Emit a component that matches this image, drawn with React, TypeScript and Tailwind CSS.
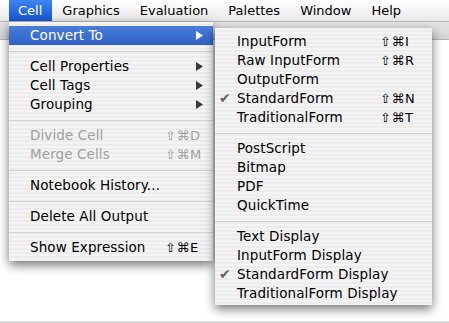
import React from "react";

type Item =
  | { sep: true }
  | { label: string; key?: string; sub?: boolean; off?: boolean; hi?: boolean; check?: boolean };

const mainItems: Item[] = [
  { label: "Convert To", sub: true, hi: true },
  { sep: true },
  { label: "Cell Properties", sub: true },
  { label: "Cell Tags", sub: true },
  { label: "Grouping", sub: true },
  { sep: true },
  { label: "Divide Cell", key: "⇧⌘D", off: true },
  { label: "Merge Cells", key: "⇧⌘M", off: true },
  { sep: true },
  { label: "Notebook History..." },
  { sep: true },
  { label: "Delete All Output" },
  { sep: true },
  { label: "Show Expression", key: "⇧⌘E" },
];

const subItems: Item[] = [
  { label: "InputForm", key: "⇧⌘I" },
  { label: "Raw InputForm", key: "⇧⌘R" },
  { label: "OutputForm" },
  { label: "StandardForm", key: "⇧⌘N", check: true },
  { label: "TraditionalForm", key: "⇧⌘T" },
  { sep: true },
  { label: "PostScript" },
  { label: "Bitmap" },
  { label: "PDF" },
  { label: "QuickTime" },
  { sep: true },
  { label: "Text Display" },
  { label: "InputForm Display" },
  { label: "StandardForm Display", check: true },
  { label: "TraditionalForm Display" },
];

const stripes =
  "bg-[repeating-linear-gradient(to_bottom,#f4f4f4_0px,#f4f4f4_2px,#ececec_2px,#ececec_4px)]";

function Arrow({ white }: { white?: boolean }) {
  return (
    <svg width="7" height="9" viewBox="0 0 7 9" className="shrink-0">
      <path d="M0 0 L7 4.5 L0 9 Z" fill={white ? "#ffffff" : "#3a3a3a"} />
    </svg>
  );
}

function Row({ item, pl, pr, keyW }: { item: Item; pl: string; pr: string; keyW: string }) {
  if ("sep" in item) {
    return (
      <div className="h-[12px] flex items-center">
        <div className="w-full h-px bg-[#d2d2d2]" />
      </div>
    );
  }
  return (
    <div
      className={
        "relative h-[19px] flex items-center " +
        pl +
        " " +
        pr +
        (item.hi ? " bg-gradient-to-b from-[#4a7ed9] to-[#2f61c6] text-white" : item.off ? " text-[#a0a0a0]" : " text-black")
      }
    >
      {item.check && (
        <span className="absolute left-[4px] top-[-1px] text-[14px] text-[#666]">✔</span>
      )}
      <span className="flex-1 whitespace-nowrap tracking-[0.1px]">{item.label}</span>
      {item.sub && <Arrow white={item.hi} />}
      {item.key && (
        <span className={keyW + " whitespace-nowrap text-[13px] tracking-[0.5px]"}>{item.key}</span>
      )}
    </div>
  );
}

export default function App() {
  const bar = ["Graphics", "Evaluation", "Palettes", "Window", "Help"];
  return (
    <div
      className="relative w-[449px] h-[323px] overflow-hidden bg-white text-[13px]"
      style={{ fontFamily: '"Lucida Grande", "DejaVu Sans", sans-serif' }}
    >
      <div className="h-[22px] flex items-stretch bg-gradient-to-b from-white to-[#e8e8e8] border-b border-[#b8b8b8]">
        <div className="ml-[9px] pl-[9px] pr-[10px] flex items-center text-white bg-gradient-to-b from-[#3d86f2] to-[#1553d0]">
          Cell
        </div>
        {bar.map((b) => (
          <div key={b} className="px-[10px] flex items-center text-black">
            {b}
          </div>
        ))}
      </div>
      <div className="h-[18px] bg-gradient-to-b from-[#e4e4e4] to-[#d4d4d4] border-b border-[#b4b4b4]" />
      <div className="absolute left-0 right-0 bottom-0 h-[2px] bg-[#dcdcdc]" />

      <div
        className={
          "absolute left-[9px] top-[22px] w-[204px] pt-[4px] pb-[4px] text-[13.5px] shadow-[0_4px_10px_rgba(0,0,0,0.55)] " +
          stripes
        }
      >
        {mainItems.map((it, i) => (
          <Row key={i} item={it} pl="pl-[21px]" pr="pr-[10px]" keyW="w-[38px]" />
        ))}
      </div>

      <div
        className={
          "absolute left-[215px] top-[28px] w-[217px] pt-[4px] pb-[2px] text-[13.5px] shadow-[0_4px_10px_rgba(0,0,0,0.55)] " +
          stripes
        }
      >
        {subItems.map((it, i) => (
          <Row key={i} item={it} pl="pl-[22px]" pr="pr-[14px]" keyW="w-[38px]" />
        ))}
      </div>
    </div>
  );
}
